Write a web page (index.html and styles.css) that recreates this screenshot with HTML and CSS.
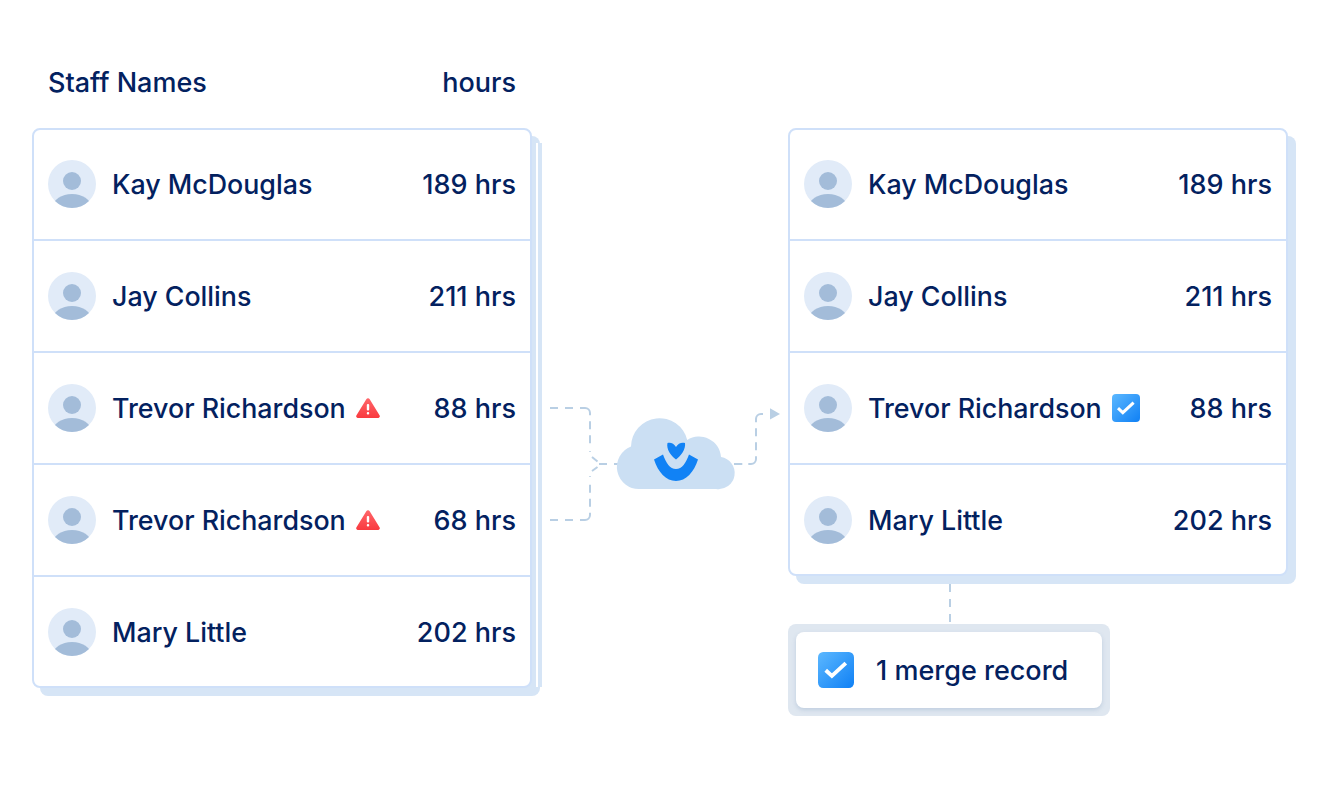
FILE: index.html
```html
<!DOCTYPE html>
<html lang="en">
<head>
<meta charset="utf-8">
<title>Staff hours merge</title>
<link rel="stylesheet" href="styles.css">
</head>
<body>
<svg width="0" height="0" class="defs" aria-hidden="true">
  <defs>
    <linearGradient id="blueGrad" x1="0" y1="0" x2="1" y2="1">
      <stop offset="0" stop-color="#5cb8ff"/>
      <stop offset="1" stop-color="#0f80f5"/>
    </linearGradient>
    <linearGradient id="redGrad" x1="0" y1="0" x2="0" y2="1">
      <stop offset="0" stop-color="#ff666a"/>
      <stop offset="1" stop-color="#f93a3f"/>
    </linearGradient>
    <clipPath id="avatarClip"><circle cx="24" cy="24" r="24"/></clipPath>
    <symbol id="avatar" viewBox="0 0 48 48">
      <circle cx="24" cy="24" r="24" fill="#e1ebf8"/>
      <circle cx="24" cy="21" r="9" fill="#a3bcd9"/>
      <ellipse cx="24" cy="47" rx="19" ry="13" fill="#a3bcd9" clip-path="url(#avatarClip)"/>
    </symbol>
    <symbol id="warn" viewBox="0 0 24 20">
      <path d="M10.300 1.200a2 2 0 0 1 3.400 0l9.800 16a1.800 1.800 0 0 1-1.600 2.800H2.100a1.800 1.800 0 0 1-1.600-2.800z" fill="url(#redGrad)"/>
      <rect x="10.800" y="6" width="2.400" height="6.600" rx="1" fill="#fff"/>
      <rect x="10.800" y="14" width="2.400" height="2.400" rx="1" fill="#fff"/>
    </symbol>
    <symbol id="check" viewBox="0 0 28 28">
      <rect width="28" height="28" rx="4" fill="url(#blueGrad)"/>
      <path d="M6 14.200l4.800 4.400 10.800-10" fill="none" stroke="#fff" stroke-width="3"/>
    </symbol>
  </defs>
</svg>

<main class="stage">
  <header class="columns">
    <span>Staff Names</span>
    <span>hours</span>
  </header>

  <section class="card card-stacked">
    <div class="rows">
      <div class="row"><svg class="avatar"><use href="#avatar"/></svg><span class="name">Kay McDouglas</span><span class="hrs">189 hrs</span></div>
      <div class="row"><svg class="avatar"><use href="#avatar"/></svg><span class="name">Jay Collins</span><span class="hrs">211 hrs</span></div>
      <div class="row"><svg class="avatar"><use href="#avatar"/></svg><span class="name">Trevor Richardson</span><svg class="warn"><use href="#warn"/></svg><span class="hrs">88 hrs</span></div>
      <div class="row"><svg class="avatar"><use href="#avatar"/></svg><span class="name">Trevor Richardson</span><svg class="warn"><use href="#warn"/></svg><span class="hrs">68 hrs</span></div>
      <div class="row"><svg class="avatar"><use href="#avatar"/></svg><span class="name">Mary Little</span><span class="hrs">202 hrs</span></div>
    </div>
  </section>

  <section class="result">
    <div class="card">
      <div class="rows">
        <div class="row"><svg class="avatar"><use href="#avatar"/></svg><span class="name">Kay McDouglas</span><span class="hrs">189 hrs</span></div>
        <div class="row"><svg class="avatar"><use href="#avatar"/></svg><span class="name">Jay Collins</span><span class="hrs">211 hrs</span></div>
        <div class="row"><svg class="avatar"><use href="#avatar"/></svg><span class="name">Trevor Richardson</span><svg class="tick"><use href="#check"/></svg><span class="hrs">88 hrs</span></div>
        <div class="row"><svg class="avatar"><use href="#avatar"/></svg><span class="name">Mary Little</span><span class="hrs">202 hrs</span></div>
      </div>
    </div>
    <div class="merge">
      <div class="merge-inner">
        <svg class="merge-tick"><use href="#check"/></svg>
        <span>1 merge record</span>
      </div>
    </div>
  </section>

  <svg class="flow" viewBox="0 0 1320 800" aria-hidden="true">
    <g fill="none" stroke="#b9cfe4" stroke-width="2">
      <path stroke-dasharray="8 7 8 7 15 6 8 6 8" d="M550 408H585a5 5 0 0 1 5 5V452"/>
      <path stroke-dasharray="8 7 8 7 15 6 8 6 8" d="M550 520H585a5 5 0 0 0 5-5V476"/>
      <path stroke-dasharray="8 7" d="M599 464H620"/>
      <path stroke-dasharray="13 6 8 6 8 6 13 6 9" d="M763 414H761a5 5 0 0 0-5 5V459a5 5 0 0 1-5 5H734"/>
      <path stroke-dasharray="8 7" d="M950 584V624"/>
      <path d="M592 457l5.500 4.500M597.500 467l-5.500 4"/>
    </g>
    <path d="M770 408.300L780 414L770 419.500Z" fill="#b9cfe4"/>
    <path d="M640 489A22 22 0 0 1 631 446.500A28.500 28.500 0 0 1 687.200 440A22 22 0 0 1 721 457A16 16 0 0 1 716 489Z" fill="#cbdff3"/>
    <path d="M654 459.500L663 454.500C666 463 670 469 676 469C682 469 686 463 689 454.500L698 459.500C694 472 686 481 676 481C666 481 658 472 654 459.500Z" fill="#1182f5"/>
    <path d="M667.500 443C670 442 674 443 676 447C678 443 682 442 685 443C686 449 681 456 676 459.500C671 456 666 449 667.500 443Z" fill="#1182f5"/>
  </svg>
</main>
</body>
</html>
```

FILE: styles.css
```css
* { box-sizing: border-box; }

html, body {
  margin: 0;
  background: #fff;
}

.defs { position: absolute; }

.stage {
  position: relative;
  width: 1320px;
  height: 800px;
  padding: 60px 0 0 32px;
  display: grid;
  grid-template-columns: 500px 500px;
  grid-template-rows: auto auto;
  column-gap: 256px;
  align-content: start;
  font-family: Inter, "Liberation Sans", sans-serif;
  font-size: 27px;
  font-weight: 450;
  color: #03215f;
}

.columns {
  grid-column: 1;
  grid-row: 1;
  height: 44px;
  margin-bottom: 24px;
  padding: 0 16px;
  display: flex;
  align-items: center;
  justify-content: space-between;
}

.card {
  position: relative;
  background: #fff;
  border: 2px solid #cfe0f9;
  border-radius: 8px;
  box-shadow: 8px 8px 0 0 #d6e5f6;
}

.card-stacked {
  grid-column: 1;
  grid-row: 2;
  align-self: start;
}

.card-stacked::after {
  content: "";
  position: absolute;
  top: 13px;
  bottom: -1px;
  right: -12px;
  width: 4px;
  border-left: 2px solid #fff;
  background: #d6e5f6;
}

.result {
  grid-column: 2;
  grid-row: 2;
}

.rows { margin: -1px 0; }

.row {
  height: 112px;
  padding: 0 14px;
  display: flex;
  align-items: center;
  border-bottom: 2px solid #cfe0f9;
}

.row:last-child {
  height: 110px;
  border-bottom: 0;
}

.avatar {
  width: 48px;
  height: 48px;
  flex: none;
  margin-right: 16px;
}

.name { font-size: 26.8px; }

.warn {
  width: 24px;
  height: 20px;
  margin-left: 10px;
  flex: none;
}

.tick {
  width: 28px;
  height: 28px;
  margin-left: 10px;
  flex: none;
}

.hrs { margin-left: auto; }

.merge {
  width: 322px;
  margin-top: 48px;
  padding: 8px;
  background: #dfe7f0;
  border-radius: 8px;
}

.merge-inner {
  height: 76px;
  padding-left: 22px;
  display: flex;
  align-items: center;
  gap: 22px;
  background: #fff;
  border-radius: 8px;
  box-shadow: 0 2px 4px rgba(120, 150, 185, 0.3);
}

.merge-tick {
  width: 36px;
  height: 36px;
  flex: none;
}

.flow {
  position: absolute;
  left: 0;
  top: 0;
  width: 1320px;
  height: 800px;
  pointer-events: none;
}
```
